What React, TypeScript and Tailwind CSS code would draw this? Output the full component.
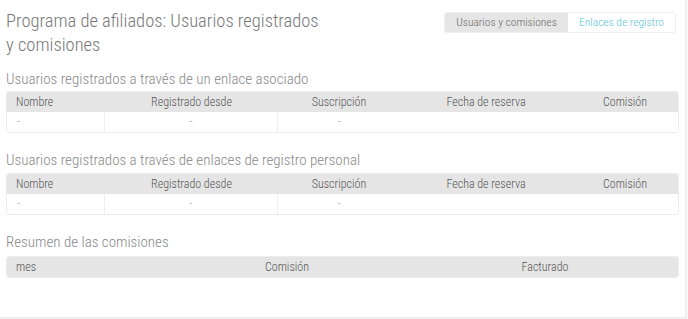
import React from 'react';

const font = "font-['Roboto_Condensed','Roboto','Liberation_Sans',sans-serif]";

type Col = { label: string; w: string; align: 'left' | 'center' };

const Table = ({ cols, rows }: { cols: Col[]; rows: string[][] }) => (
  <div className="mx-[6px] rounded-[3px] border border-[#ececec] overflow-hidden">
    <div className="flex h-[20px] bg-[#e5e5e5] text-[12px] font-light text-[#555]">
      {cols.map((c) => (
        <div key={c.label} className={`${c.w} flex items-center ${c.align === 'left' ? 'pl-[9px]' : 'justify-center'}`}>
          {c.label}
        </div>
      ))}
    </div>
    {rows.map((r, i) => (
      <div key={i} className="flex h-[20px] bg-white text-[12px] font-light text-[#999]">
        {cols.map((c, j) => (
          <div
            key={c.label}
            className={`${c.w} flex items-center ${c.align === 'left' ? 'pl-[10px]' : 'justify-center'} ${j < 2 ? 'border-r border-[#eee]' : ''}`}
          >
            {r[j]}
          </div>
        ))}
      </div>
    ))}
  </div>
);

const userCols: Col[] = [
  { label: 'Nombre', w: 'w-[98px]', align: 'left' },
  { label: 'Registrado desde', w: 'w-[173px]', align: 'center' },
  { label: 'Suscripción', w: 'w-[122px]', align: 'center' },
  { label: 'Fecha de reserva', w: 'w-[172px]', align: 'center' },
  { label: 'Comisión', w: 'flex-1', align: 'center' },
];

export default function App() {
  return (
    <div className={`w-[688px] h-[319px] bg-[#f5f5f5] ${font}`}>
      <div className="w-[686px] h-[318px] bg-white border-r border-b border-[#e9e9e9]">
        <div className="flex justify-between items-start pt-[9px]">
          <h1 className="ml-[6px] whitespace-nowrap text-[18.5px] leading-[24px] font-light text-[#777]">
            Programa de afiliados: Usuarios registrados
            <br />y comisiones
          </h1>
          <div className="mr-[9px] mt-[3px] flex h-[21px] rounded-[3px] border border-[#eee] overflow-hidden text-[11.5px] font-light">
            <div className="w-[123px] bg-[#e6e6e6] text-[#666] flex items-center justify-center">Usuarios y comisiones</div>
            <div className="w-[107px] bg-white text-[#5bc4dc] flex items-center justify-center">Enlaces de registro</div>
          </div>
        </div>

        <h2 className="ml-[6px] mt-[13px] mb-[3px] text-[15px] leading-[18px] font-light text-[#888]">
          Usuarios registrados a través de un enlace asociado
        </h2>
        <Table cols={userCols} rows={[['-', '-', '-', '', '']]} />

        <h2 className="ml-[6px] mt-[18px] mb-[4px] text-[15px] leading-[18px] font-light text-[#888]">
          Usuarios registrados a través de enlaces de registro personal
        </h2>
        <Table cols={userCols} rows={[['-', '-', '-', '', '']]} />

        <h2 className="ml-[6px] mt-[18px] mb-[5px] text-[15px] leading-[18px] font-light text-[#888]">
          Resumen de las comisiones
        </h2>
        <Table
          cols={[
            { label: 'mes', w: 'w-[155px]', align: 'left' },
            { label: 'Comisión', w: 'w-[250px]', align: 'center' },
            { label: 'Facturado', w: 'flex-1', align: 'center' },
          ]}
          rows={[]}
        />
      </div>
    </div>
  );
}
